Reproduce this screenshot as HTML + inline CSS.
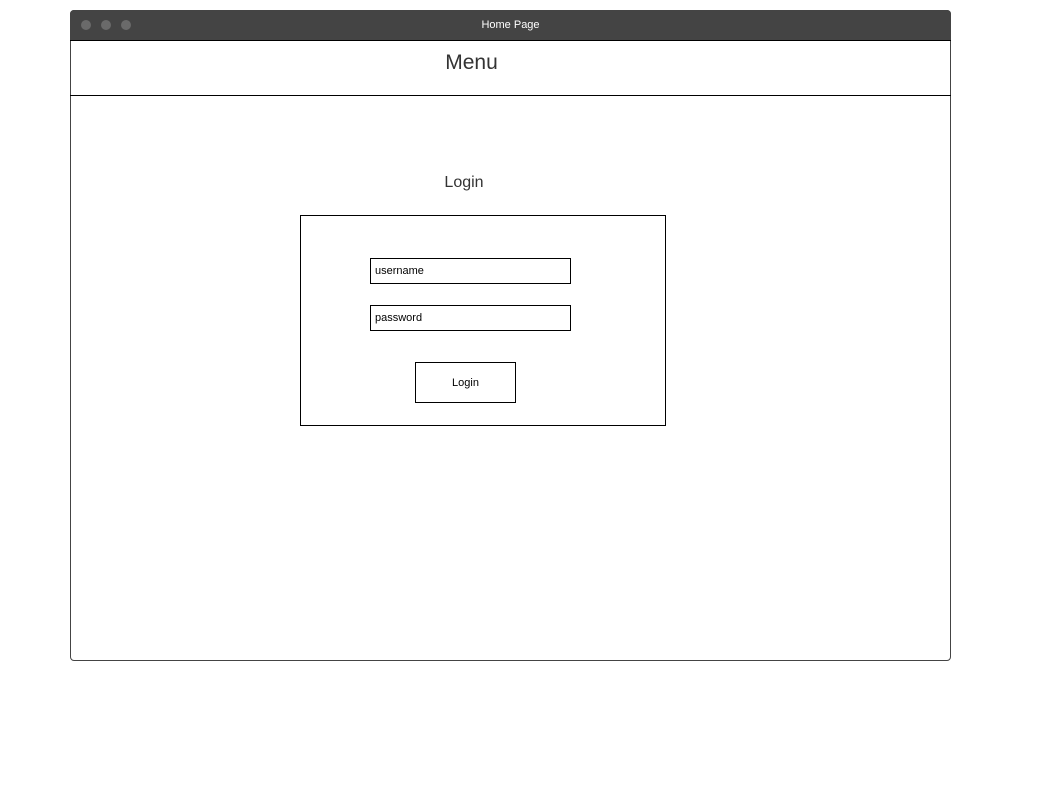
<!DOCTYPE html>
<html><head><style>
body{margin:0;width:1041px;height:810px;background:#fff;position:relative;font-family:"Liberation Sans",sans-serif;overflow:hidden}
.a{position:absolute;box-sizing:border-box}
</style></head><body>
<div class="a" style="left:70px;top:10px;width:881px;height:651px;border:1px solid #444;border-radius:4px"></div>
<div class="a" style="left:70px;top:10px;width:881px;height:31px;background:#444;border-radius:4px 4px 0 0;border-bottom:1px solid #000"></div>
<div class="a" style="left:81px;top:20px;width:10px;height:10px;border-radius:50%;background:#6a6a6a"></div>
<div class="a" style="left:101px;top:20px;width:10px;height:10px;border-radius:50%;background:#6a6a6a"></div>
<div class="a" style="left:121px;top:20px;width:10px;height:10px;border-radius:50%;background:#6a6a6a"></div>
<div class="a" style="left:70px;top:19px;width:881px;text-align:center;color:#fff;font-size:11px">Home Page</div>
<div class="a" style="left:70px;top:95px;width:881px;height:1px;background:#000"></div>
<div class="a" style="left:70px;top:51px;width:803px;text-align:center;color:#333;font-size:21px">Menu</div>
<div class="a" style="left:300px;top:174px;width:328px;text-align:center;color:#333;font-size:16px">Login</div>
<div class="a" style="left:300px;top:215px;width:366px;height:211px;border:1px solid #000"></div>
<div class="a" style="left:370px;top:258px;width:201px;height:26px;border:1px solid #000;font-size:11px;padding:6px 4px">username</div>
<div class="a" style="left:370px;top:305px;width:201px;height:26px;border:1px solid #000;font-size:11px;padding:6px 4px">password</div>
<div class="a" style="left:415px;top:362px;width:101px;height:41px;border:1px solid #000;font-size:11px;text-align:center;line-height:41px">Login</div>
</body></html>
